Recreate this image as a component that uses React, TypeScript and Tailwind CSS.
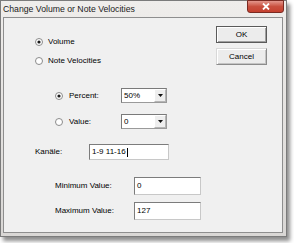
import React from "react";

function Radio({ checked }: { checked?: boolean }) {
  return (
    <svg width="8" height="8" viewBox="0 0 8 8" className="shrink-0">
      <circle cx="4" cy="4" r="3.5" fill="#ffffff" stroke="#8a8a8a" strokeWidth="1" />
      {checked && <circle cx="4" cy="4" r="1.6" fill="#1a1a1a" />}
    </svg>
  );
}

function Combo({ value }: { value: string }) {
  return (
    <div className="w-[46px] h-[15px] bg-white border border-[#9a9a9a] border-t-[#7a7a7a] border-l-[#7a7a7a] flex items-center">
      <span className="flex-1 pl-[2px] text-[8px] leading-none text-black">{value}</span>
      <div className="w-[12px] h-[13px] bg-[#eeeeee] border border-[#b5b5b5] border-t-white border-l-white flex items-center justify-center">
        <svg width="5" height="3" viewBox="0 0 5 3">
          <polygon points="0,0 5,0 2.5,3" fill="#111111" />
        </svg>
      </div>
    </div>
  );
}

function TextBox({ value, w, h, caret }: { value: string; w: string; h: string; caret?: boolean }) {
  return (
    <div className={`${w} ${h} bg-white border border-[#c8c8c8] border-t-[#7c7c7c] border-l-[#7c7c7c] flex items-center pl-[2px]`}>
      <span className="text-[8px] leading-none text-black">{value}</span>
      {caret && <span className="w-px h-[9px] bg-black ml-[1px]" />}
    </div>
  );
}

function Button({ label, isDefault }: { label: string; isDefault?: boolean }) {
  return (
    <div
      className={`w-[51px] h-[17px] flex items-center justify-center bg-[#ececec] text-[8px] text-black ${
        isDefault
          ? "border border-[#5a5a5a] shadow-[inset_1px_1px_0_#ffffff,inset_-1px_-1px_0_#a0a0a0]"
          : "border border-[#d8d8d8] border-b-[#8c8c8c] border-r-[#8c8c8c] shadow-[inset_1px_1px_0_#ffffff,inset_-1px_-1px_0_#c4c4c4]"
      }`}
    >
      {label}
    </div>
  );
}

export default function App() {
  return (
    <div className="w-[294px] h-[243px] bg-white font-['Liberation_Sans',Arial,sans-serif] text-black">
      <div className="w-[287px] h-[237px] border border-[#7b7b7b] bg-gradient-to-b from-[#efedeb] to-[#d9d7d5] shadow-[3px_4px_4px_rgba(0,0,0,0.45)] flex flex-col">
        {/* title bar */}
        <div className="h-[16px] flex items-start justify-between">
          <span className="text-[8.7px] leading-none mt-[4px] ml-[2px] text-[#1b1b1b]">
            Change Volume or Note Velocities
          </span>
          <div className="w-[37px] h-[13px] mt-[-1px] mr-[2px] rounded-b-[3px] border border-[#7a2a22] bg-gradient-to-b from-[#e3968c] via-[#c9503f] to-[#c5402f] flex items-center justify-center">
            <svg width="8" height="7" viewBox="0 0 8 7">
              <path d="M1 0.5 L7 6.5 M7 0.5 L1 6.5" stroke="#ffffff" strokeWidth="1.8" />
            </svg>
          </div>
        </div>
        {/* client */}
        <div className="ml-[2px] mr-[3px] mb-[3px] flex-1 border border-[#8e8e8e] bg-[#f0f0f0] flex">
          <div className="w-[212px] flex flex-col text-[8px] leading-none">
            <div className="mt-[18px] ml-[31px] h-[12px] flex items-center gap-[5px]">
              <Radio checked />
              <span>Volume</span>
            </div>
            <div className="mt-[7px] ml-[31px] h-[12px] flex items-center gap-[5px]">
              <Radio />
              <span>Note Velocities</span>
            </div>
            <div className="mt-[21px] ml-[51px] h-[15px] flex items-center">
              <Radio checked />
              <span className="ml-[6px] w-[52px]">Percent:</span>
              <Combo value="50%" />
            </div>
            <div className="mt-[11px] ml-[51px] h-[15px] flex items-center">
              <Radio />
              <span className="ml-[6px] w-[52px]">Value:</span>
              <Combo value="0" />
            </div>
            <div className="mt-[15px] ml-[31px] flex items-center">
              <span className="w-[54px]">Kanäle:</span>
              <TextBox value="1-9 11-16" w="w-[80px]" h="h-[16px]" caret />
            </div>
            <div className="mt-[17px] ml-[51px] flex items-center">
              <span className="w-[79px]">Minimum Value:</span>
              <TextBox value="0" w="w-[67px]" h="h-[18px]" />
            </div>
            <div className="mt-[7px] ml-[51px] flex items-center">
              <span className="w-[79px]">Maximum Value:</span>
              <TextBox value="127" w="w-[67px]" h="h-[18px]" />
            </div>
          </div>
          <div className="mt-[8px] flex flex-col gap-[5px]">
            <Button label="OK" isDefault />
            <Button label="Cancel" />
          </div>
        </div>
      </div>
    </div>
  );
}
